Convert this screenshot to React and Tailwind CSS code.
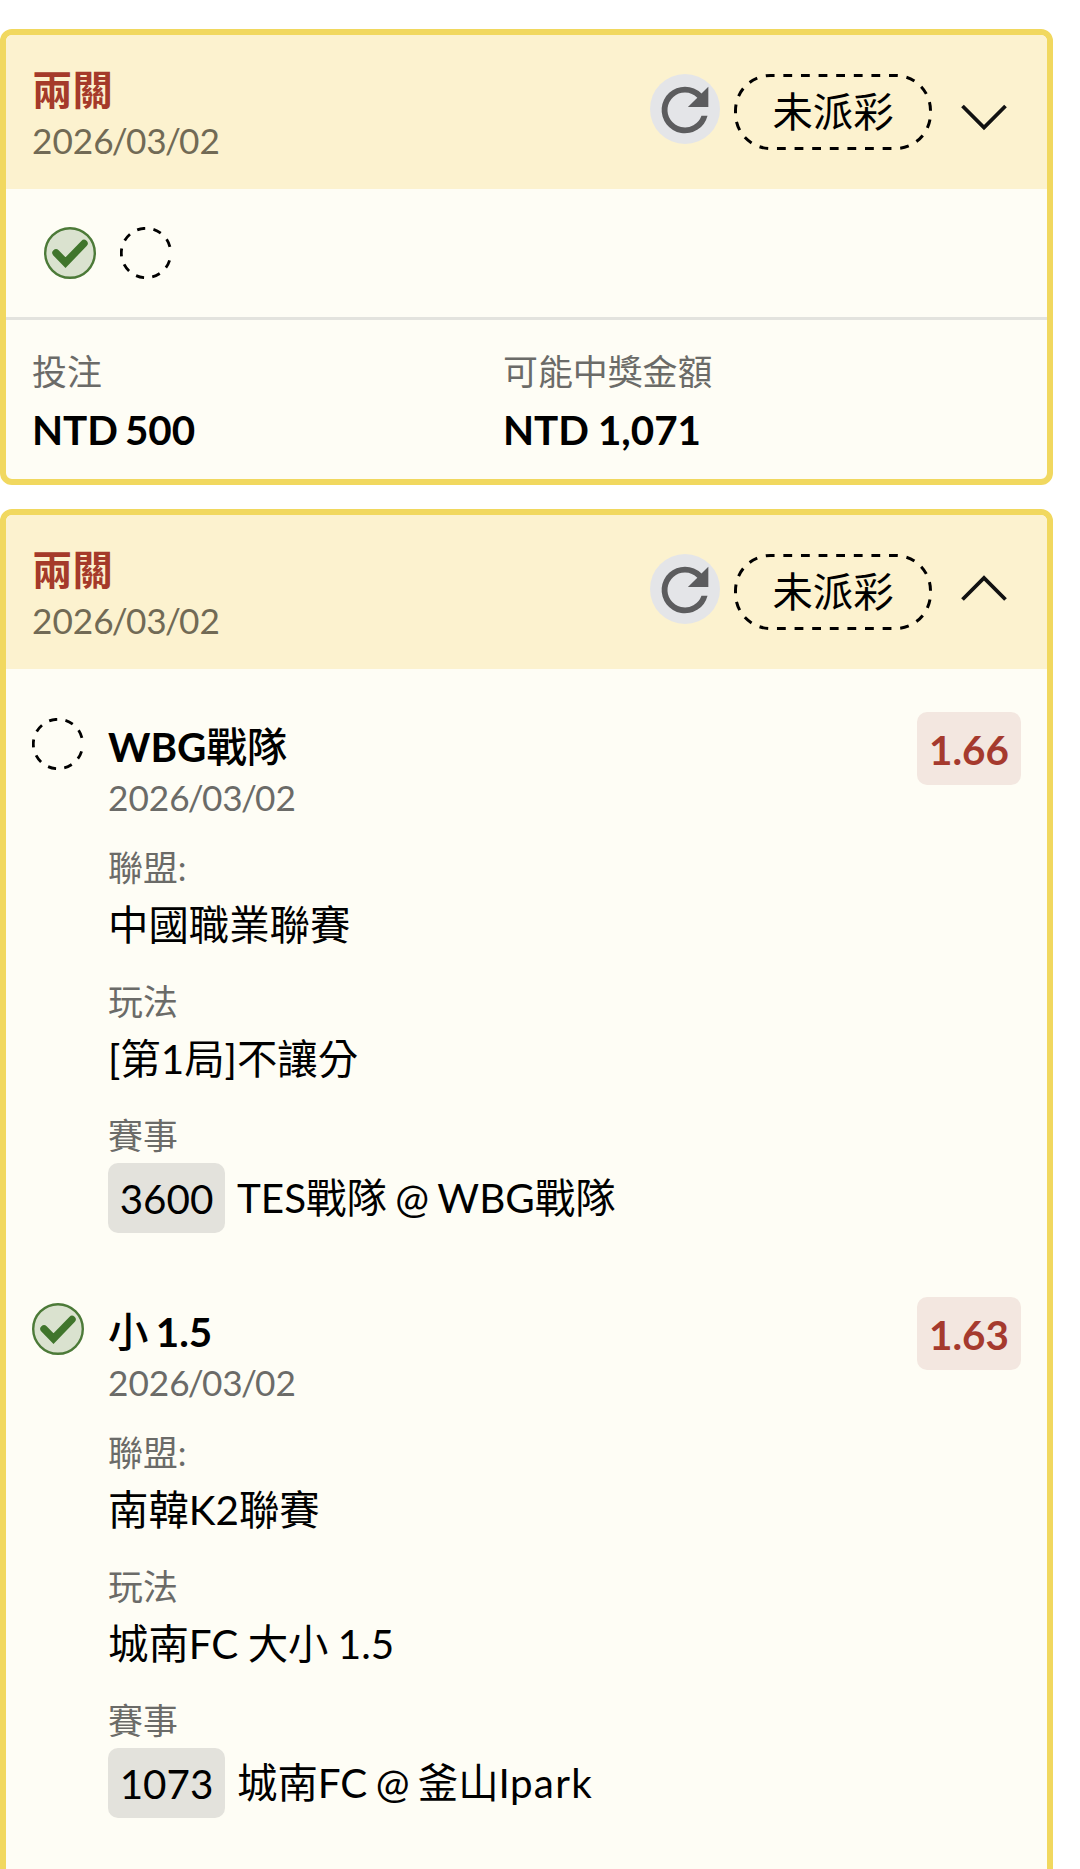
import React, { useState } from "react";

const BETS = [
  {
    id: 1,
    title: "兩關",
    date: "2026/03/02",
    status: "未派彩",
    open: false,
    stake: "NTD 500",
    payout: "NTD 1,071",
    legs: [{ id: "a", won: true }, { id: "b", won: false }],
  },
  {
    id: 2,
    title: "兩關",
    date: "2026/03/02",
    status: "未派彩",
    open: true,
    stake: "NTD 500",
    payout: "NTD 1,353",
    legs: [
      {
        id: "a",
        won: false,
        pick: "WBG戰隊",
        date: "2026/03/02",
        league: "中國職業聯賽",
        market: "[第1局]不讓分",
        code: "3600",
        match: "TES戰隊 @ WBG戰隊",
        odds: "1.66",
      },
      {
        id: "b",
        won: true,
        pick: "小 1.5",
        date: "2026/03/02",
        league: "南韓K2聯賽",
        market: "城南FC 大小 1.5",
        code: "1073",
        match: "城南FC @ 釜山Ipark",
        odds: "1.63",
      },
    ],
  },
];

// Bold latin letters next to medium weight chinese characters
function PickName({ text }) {
  return text.split(/([\u4e00-\u9fff]+)/).map((part, i) => (
    <span key={i} className={i % 2 ? "font-medium" : "font-bold"}>
      {part}
    </span>
  ));
}

// Lowercase words get a little more room between letters
function MatchName({ text }) {
  return text.split(/([a-z]+)/).map((part, i) => (
    <span key={i} className={i % 2 ? "tracking-[1.3px]" : ""}>
      {part}
    </span>
  ));
}

function DateText({ value }) {
  return value.split("/").map((part, i) => (
    <span key={i}>
      {i > 0 && <span className="-mx-[1.8px]">/</span>}
      {part}
    </span>
  ));
}

function LegIcon({ won }) {
  if (won) {
    return (
      <svg className="w-[52px] h-[52px] shrink-0" viewBox="0 0 52 52" fill="none">
        <circle cx="26" cy="26" r="24.8" fill="#dae2cf" stroke="#4c7a38" strokeWidth="2.4" />
        <path
          d="M12 25.8 21.5 35.6 40 16.5"
          stroke="#40752c"
          strokeWidth="7.4"
          strokeLinecap="round"
        />
      </svg>
    );
  }

  return (
    <svg className="w-[52px] h-[52px] shrink-0" viewBox="0 0 52 52" fill="none">
      <circle
        cx="26"
        cy="26"
        r="24.7"
        stroke="#000"
        strokeWidth="2.8"
        pathLength="360"
        strokeDasharray="19 19.6"
        strokeDashoffset="-17.5"
      />
    </svg>
  );
}

function RefreshButton() {
  return (
    <button
      type="button"
      className="flex w-[70px] h-[70px] items-center justify-center rounded-full bg-[#e4e5e8]"
    >
      <svg className="w-[70px] h-[70px] translate-y-px" viewBox="0 0 24 24" fill="#5c5c5e">
        <path d="M17.65 6.35A7.96 7.96 0 0 0 12 4a8 8 0 1 0 7.73 10h-2.08A6 6 0 1 1 12 6c1.66 0 3.14.69 4.22 1.78L13 11h7V4l-2.35 2.35z" />
      </svg>
    </button>
  );
}

function StatusPill({ label }) {
  return (
    <div className="relative flex w-[198px] h-[76px] items-center justify-center pt-[1px] text-[40.4px] leading-none text-black">
      <svg className="absolute inset-0 w-full h-full" viewBox="0 0 198 76" fill="none">
        <rect
          x="1.5"
          y="1.5"
          width="195"
          height="73"
          rx="35"
          stroke="#000"
          strokeWidth="3"
          pathLength="270"
          strokeDasharray="5 5"
          strokeDashoffset="2.7"
        />
      </svg>
      {label}
    </div>
  );
}

function Chevron({ open }) {
  return (
    <svg className="w-[50px] h-[30px]" viewBox="0 0 50 30" fill="none">
      <path
        d={open ? "M3.5 25.5 25 4 46.5 25.5" : "M3.5 4 25 25.5 46.5 4"}
        stroke="#111"
        strokeWidth="3.8"
      />
    </svg>
  );
}

function Leg({ leg }) {
  return (
    <div className="flex h-[585px] items-start">
      <div className="mt-[6px]">
        <LegIcon won={leg.won} />
      </div>
      <div className="ml-[24px] mt-[9px] flex-1">
        <div className="h-[51px] text-[40.4px] leading-[51px] text-black [word-spacing:-2.5px]">
          <PickName text={leg.pick} />
        </div>
        <div className="h-[50px] text-[35.2px] leading-[50px] text-[#6b6b68]">
          <DateText value={leg.date} />
        </div>

        <div className="mt-[21px] h-[50px] text-[34.9px] leading-[50px] text-[#6b6b68]">聯盟:</div>
        <div className="h-[64px] text-[40.4px] leading-[63px] text-black">{leg.league}</div>

        <div className="mt-[20px] h-[50px] text-[34.9px] leading-[50px] text-[#6b6b68]">玩法</div>
        <div className="h-[64px] text-[40.4px] leading-[63px] text-black [word-spacing:-1px]">{leg.market}</div>

        <div className="mt-[20px] h-[50px] text-[34.9px] leading-[50px] text-[#6b6b68]">賽事</div>
        <div className="mt-[2px] flex h-[70px] items-center text-[40.4px] text-black">
          <span className="mr-[12px] flex w-[117px] h-[70px] items-center justify-center rounded-[10px] bg-[#e3e2dc] pt-[3px] leading-none">
            {leg.code}
          </span>
          <span className="leading-[70px] [word-spacing:-2px]">
            <MatchName text={leg.match} />
          </span>
        </div>
      </div>
      <div className="flex w-[104px] h-[73px] items-center justify-center rounded-[10px] bg-[#f3e7e0] pt-[4px] text-[40.4px] font-bold leading-none text-[#a53a2e]">
        {leg.odds}
      </div>
    </div>
  );
}

function BetCard({ bet }) {
  const [open, setOpen] = useState(bet.open);

  return (
    <section className="w-[1053px] shrink-0 overflow-hidden rounded-[12px] border-[6px] border-[#f1d85f] bg-[#fefdf5]">
      <header
        className="flex h-[154px] items-start bg-[#fcf2cf] pl-[26px] pr-[38px] cursor-pointer"
        onClick={() => setOpen(!open)}
      >
        <div className="mt-[30px] flex-1">
          <div className="text-[40.4px] leading-[50px] font-bold text-[#a53a2a]">{bet.title}</div>
          <div className="text-[35.2px] leading-[51px] text-[#716a55]">
            <DateText value={bet.date} />
          </div>
        </div>
        <div className="mt-[39px] flex items-start">
          <RefreshButton />
          <div className="ml-[14px]">
            <StatusPill label={bet.status} />
          </div>
          <div className={open ? "ml-[27px] mt-[20px]" : "ml-[27px] mt-[27.5px]"}>
            <Chevron open={open} />
          </div>
        </div>
      </header>

      {open ? (
        <div className="pl-[26px] pr-[26px] pt-[43px]">
          {bet.legs.map((leg) => (
            <Leg key={leg.id} leg={leg} />
          ))}
        </div>
      ) : (
        <>
          <div className="flex h-[131px] gap-[24px] border-b-[3px] border-[#e3e3de] pl-[37.7px] pt-[38px]">
            {bet.legs.map((leg) => (
              <LegIcon key={leg.id} won={leg.won} />
            ))}
          </div>
          <div className="grid h-[159px] grid-cols-[471px_1fr] content-start px-[26px] pt-[25px]">
            <div className="text-[34.9px] leading-[53px] text-[#6b6b68]">投注</div>
            <div className="text-[34.9px] leading-[53px] text-[#6b6b68]">可能中獎金額</div>
            <div className="text-[40.4px] leading-[64px] font-bold text-black [word-spacing:-3px]">{bet.stake}</div>
            <div className="text-[40.4px] leading-[64px] font-bold text-black [word-spacing:-1px]">{bet.payout}</div>
          </div>
        </>
      )}
    </section>
  );
}

function App() {
  return (
    <div className="flex h-[1869px] w-[1080px] flex-col gap-[24px] overflow-hidden bg-white pt-[29px] font-['Lato','Noto_Sans_CJK_TC',sans-serif]">
      {BETS.map((bet) => (
        <BetCard key={bet.id} bet={bet} />
      ))}
    </div>
  );
}

export default App;
